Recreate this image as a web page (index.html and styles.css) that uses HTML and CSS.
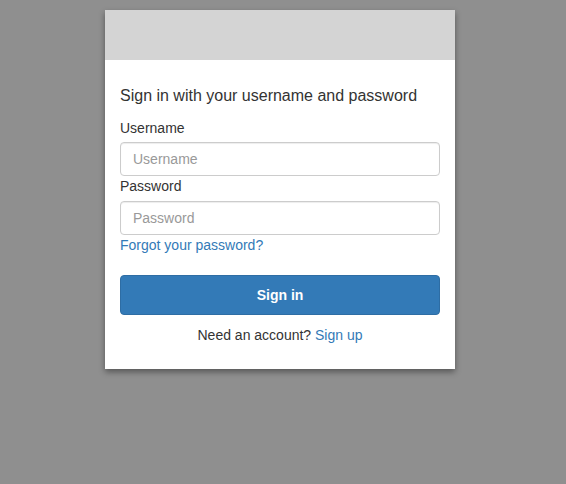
FILE: index.html
```html
<!DOCTYPE html>
<html>
<head>
<meta charset="utf-8">
<link rel="stylesheet" href="styles.css">
</head>
<body>
<div class="card">
  <div class="banner"></div>
  <form class="content">
    <h3 class="title">Sign in with your username and password</h3>
    <label class="label" for="u">Username</label>
    <input class="field" id="u" type="text" placeholder="Username">
    <label class="label" for="p">Password</label>
    <input class="field" id="p" type="password" placeholder="Password">
    <a class="link forgot" href="#">Forgot your password?</a>
    <button class="btn" type="button">Sign in</button>
    <p class="footer">Need an account? <a class="link" href="#">Sign up</a></p>
  </form>
</div>
</body>
</html>
```
FILE: styles.css
```css
html, body {
  margin: 0;
  padding: 0;
  background: #8f8f8f;
  height: 100%;
}
body {
  padding: 10px 0 0 105px;
  box-sizing: border-box;
  font-family: "Liberation Sans", Arial, sans-serif;
  color: #333;
}
.card {
  width: 350px;
  background: #fff;
  box-shadow: 0 3px 6px rgba(0,0,0,0.4);
}
.banner {
  height: 50px;
  background: #d4d4d4;
}
.content {
  display: flex;
  flex-direction: column;
  padding: 26px 15px 24px;
}
.title {
  margin: 0 0 12px;
  font-size: 16px;
  font-weight: normal;
  line-height: 20px;
  color: #333;
}
.label {
  font-size: 14px;
  line-height: 20px;
  margin-bottom: 4px;
}
.label + .field { }
.field {
  height: 34px;
  box-sizing: border-box;
  border: 1px solid #ccc;
  border-radius: 4px;
  padding: 6px 12px;
  font-family: inherit;
  font-size: 14px;
  color: #555;
  box-shadow: inset 0 1px 1px rgba(0,0,0,0.075);
  margin: 0;
}
.field::placeholder { color: #999; }
#p { margin-top: 1px; }
.link {
  color: #337ab7;
  text-decoration: none;
  font-size: 14px;
}
.forgot {
  line-height: 20px;
  align-self: flex-start;
}
.btn {
  margin-top: 20px;
  height: 40px;
  background: #337ab7;
  border: 1px solid #2e6da4;
  border-radius: 4px;
  color: #fff;
  font-family: inherit;
  font-size: 14px;
  font-weight: bold;
}
.footer {
  margin: 10px 0 0;
  text-align: center;
  font-size: 14px;
  line-height: 20px;
}
```
